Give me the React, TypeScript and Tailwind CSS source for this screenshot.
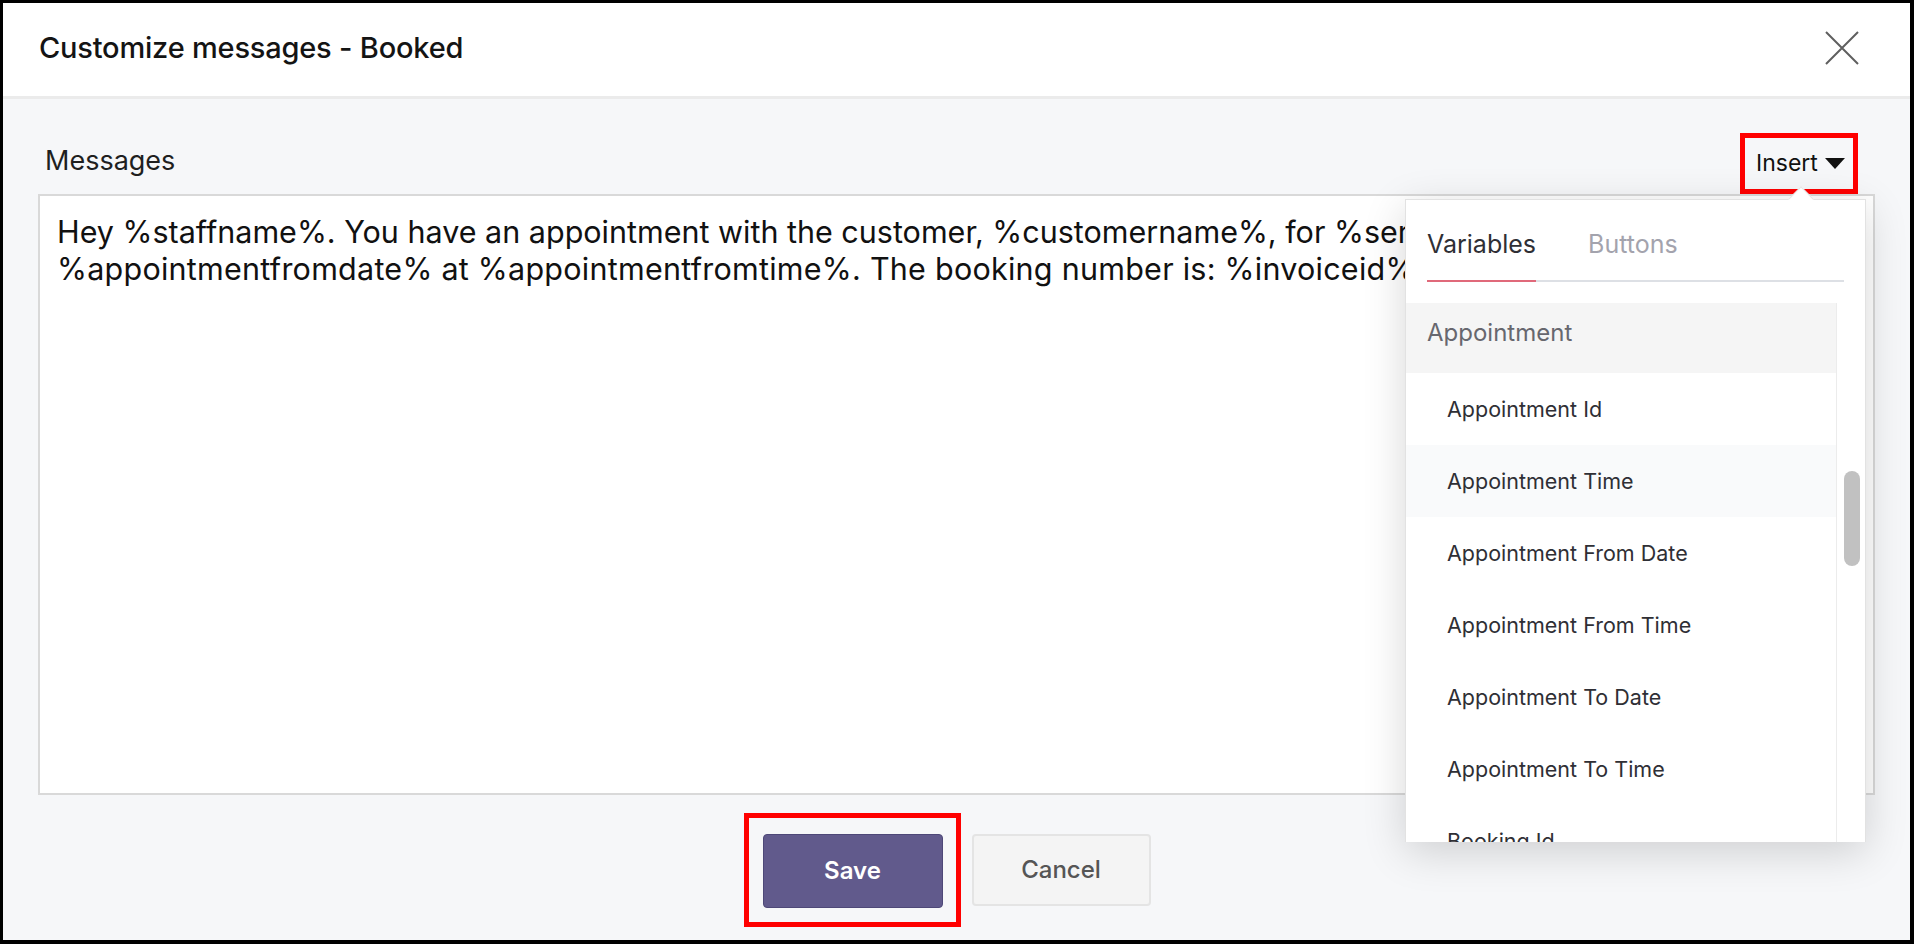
import { useState } from 'react'

const items = [
  'Appointment Id',
  'Appointment Time',
  'Appointment From Date',
  'Appointment From Time',
  'Appointment To Date',
  'Appointment To Time',
  'Booking Id',
]

function InsertPanel() {
  const [tab, setTab] = useState<'variables' | 'buttons'>('variables')
  return (
    <div className="absolute left-[1402px] top-[196px] w-[461px] h-[643px] bg-white border border-[#e2e2e2] shadow-[0_10px_40px_rgba(0,0,0,0.16)]">
      <div className="absolute left-[386px] -top-[10px] w-[18px] h-[18px] rotate-45 bg-white border-l border-t border-[#e6e6e6]" />
      <div className="relative h-[103px] bg-white px-[21px] pt-[29px]">
        <div className="flex gap-[52px] border-b-2 border-[#dde0e5]">
          <button
            onClick={() => setTab('variables')}
            className={
              'pb-[21px] -mb-[2px] border-b-2 text-[25px] leading-[30px] ' +
              (tab === 'variables' ? 'border-[#e0697a] text-[#2f2f35]' : 'border-transparent text-[#a3a3ad]')
            }
          >
            Variables
          </button>
          <button
            onClick={() => setTab('buttons')}
            className={
              'pb-[21px] -mb-[2px] border-b-2 text-[25px] leading-[30px] ' +
              (tab === 'buttons' ? 'border-[#e0697a] text-[#2f2f35]' : 'border-transparent text-[#a3a3ad]')
            }
          >
            Buttons
          </button>
        </div>
      </div>
      <div className="flex h-[539px] overflow-hidden">
        <div className="flex-1 overflow-hidden">
          <div className="h-[70px] flex items-center pl-[21px] pb-[10px] bg-[#f5f5f5] text-[24px] text-[#67676e]">
            Appointment
          </div>
          {items.map((it, i) => (
            <div
              key={it}
              className={
                'h-[72px] flex items-center pl-[41px] text-[21.5px] text-[#2f2f35] ' +
                (i === 1 ? 'bg-[#f9fafb]' : 'bg-white')
              }
            >
              {it}
            </div>
          ))}
        </div>
        <div className="w-[29px] border-l border-[#ececec] bg-white relative">
          <div className="absolute left-[7px] top-[168px] w-[16px] h-[95px] rounded-full bg-[#c1c1c1]" />
        </div>
      </div>
    </div>
  )
}

export default function App() {
  return (
    <div
      className="relative w-[1914px] h-[944px] overflow-hidden border-[3px] border-r-4 border-b-4 border-black bg-[#f6f7f9] flex flex-col"
      style={{ fontFamily: 'Inter, "Noto Sans", sans-serif' }}
    >
      <header className="h-[96px] shrink-0 bg-white border-b-[3px] border-[#ebebeb] flex items-center justify-between pl-[36px] pr-[51px] pb-[4px]">
        <h1 className="text-[29px] font-medium text-[#141414] tracking-[-0.2px]">Customize messages - Booked</h1>
        <button className="w-[34px] h-[34px] flex items-center justify-center">
          <svg width="34" height="34" viewBox="0 0 34 34" fill="none" stroke="#5f5f5f" strokeWidth="2">
            <path d="M1 1 L33 33 M33 1 L1 33" />
          </svg>
        </button>
      </header>

      <main className="flex-1 flex flex-col px-[35px]">
        <div className="h-[95px] flex justify-between items-start">
          <span className="mt-[48px] ml-[7px] text-[27px] leading-none text-[#1f1f1f]">Messages</span>
          <div className="mt-[34px] mr-[17px] w-[118px] h-[61px] border-[5px] border-[#ff0000] flex items-center pl-[11px] gap-[7px]">
            <span className="text-[23px] leading-none text-[#111]">Insert</span>
            <svg width="20" height="11" viewBox="0 0 20 11">
              <path d="M0 0 H20 L10 11 Z" fill="#111" />
            </svg>
          </div>
        </div>

        <div className="h-[601px] bg-white border-2 border-[#d9d9d9] pl-[17px] pt-[17px] text-[30.5px] leading-[37px] text-[#111] overflow-hidden">
          <div className="whitespace-nowrap">
            Hey %staffname%. You have an appointment with the customer, %customername%, for %servicename% on
          </div>
          <div className="whitespace-nowrap tracking-[0.25px]">
            %appointmentfromdate% at %appointmentfromtime%. The booking number is: %invoiceid%.
          </div>
        </div>

        <div className="mt-[39px] flex justify-center gap-[29px]">
          <div className="relative">
            <div className="absolute -left-[19px] -top-[21px] -right-[18px] -bottom-[19px] border-[5px] border-[#ff0000]" />
            <button className="w-[180px] h-[74px] rounded-[4px] bg-[#615a8c] border border-[#4e4878] text-white text-[24px] font-semibold">
              Save
            </button>
          </div>
          <button className="w-[179px] h-[72px] rounded-[4px] bg-[#f4f4f4] border-2 border-[#e4e4e4] text-[#555] text-[24px] font-medium">
            Cancel
          </button>
        </div>
      </main>

      <InsertPanel />
    </div>
  )
}
